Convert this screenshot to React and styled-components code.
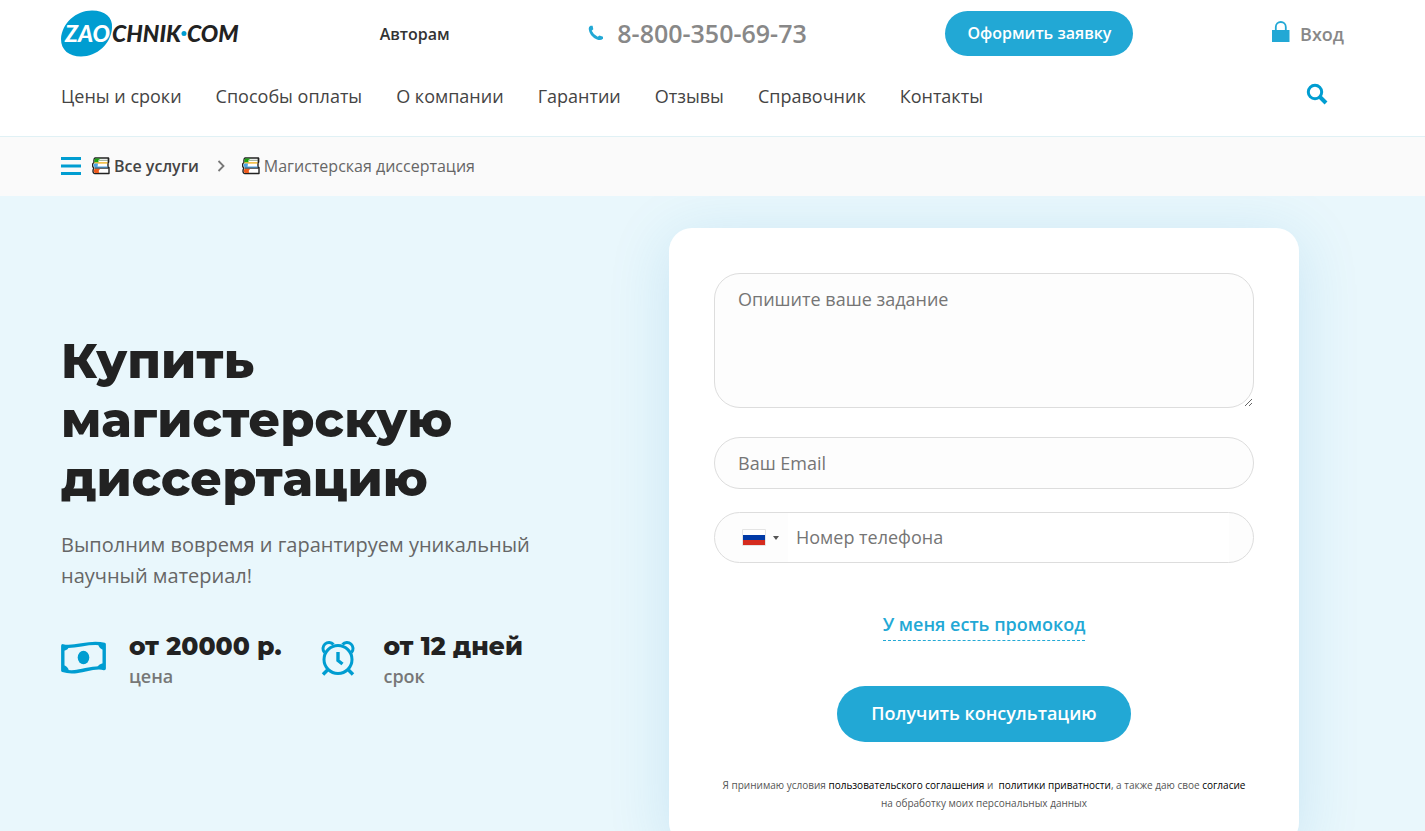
import React from 'react'
import styled, { createGlobalStyle } from 'styled-components'

const menu = ['Цены и сроки', 'Способы оплаты', 'О компании', 'Гарантии', 'Отзывы', 'Справочник', 'Контакты']

const Books = () => (
  <BooksIcon viewBox="0 0 18 18" aria-hidden="true">
    <path d="M3 1H16.500V5.500H16V10.500H17V16.500H3Q1 16.500 1 14Q1 12 2 11Q.500 10 .500 8Q.500 6.500 2 5.500Q1.500 1.500 3 1Z" fill="#fff" stroke="#222" strokeWidth="1.400" strokeLinejoin="round" />
    <path d="M3 1.500H9L6.500 3V5.500H2.500Q2 2.500 3 1.500Z" fill="#18a311" />
    <path d="M6.500 3.300H16" stroke="#8fa58c" />
    <path d="M2.500 5.900H15.500" stroke="#f0b323" strokeWidth="1.400" />
    <path d="M2.500 6.500H6L5.500 10H2.500Q.500 8 2.500 6.500Z" fill="#4da3e2" />
    <path d="M3 10.200H15.500" stroke="#4da3e2" strokeWidth="1.400" />
    <path d="M3 11.200H16.500" stroke="#222" />
    <path d="M2.500 12H8Q6 13.500 7 16H3Q1 14.500 2.500 12Z" fill="#ee5a1c" />
    <path d="M16.500 1V5" stroke="#222" strokeWidth="1.400" />
  </BooksIcon>
)

const App = () => {
  return (
    <>
      <GlobalStyle />
      <Header>
        <TopRow>
          <Logo href="#">
            <LogoMark viewBox="0 0 180 48" role="img" aria-label="ZAOCHNIK.COM">
              <path d="M31 .500C44 .500 52 7 51 18C50 34 36 46.500 20 46.500C8 46.500 0 40 0 29C1 13 15 .500 31 .500Z" fill="#009dd1" />
              <text x="4" y="32" fill="#fff">ZAO</text>
              <text x="51" y="32" fill="#222">CHNIK</text>
              <circle cx="123" cy="23.500" r="2.500" fill="#009dd1" />
              <text x="126" y="32" fill="#222">COM</text>
            </LogoMark>
          </Logo>
          <AuthorLink href="#">Авторам</AuthorLink>
          <Phone href="tel:88003506973">
            <svg width="16" height="16" viewBox="0 0 16 16" aria-hidden="true">
              <path d="M2.500.700 4.600.700 5.300 4.300 3.700 5.700Q5.500 9.800 9.700 11.700L11.500 10.400 15 11.800V13.800Q12.500 16 9 14.400Q1.500 11.500.700 4Q.500 1.800 2.500.700Z" fill="#22a8d5" />
            </svg>
            8-800-350-69-73
          </Phone>
          <Order type="button">Оформить заявку</Order>
          <Login href="#">
            <svg width="18" height="26" viewBox="0 0 18 26" aria-hidden="true">
              <path d="M0 9h17.500v12H0z" fill="#22a8d5" />
              <path d="M3.800 10V6a5 5 0 0 1 10 0v4" fill="none" stroke="#22a8d5" strokeWidth="1.800" />
            </svg>
            Вход
          </Login>
        </TopRow>
        <NavRow>
          <Nav>
            {menu.map((item) => <NavLink href="#" key={item}>{item}</NavLink>)}
          </Nav>
          <IconButton type="button" aria-label="Поиск">
            <svg width="22" height="26" viewBox="0 0 22 26" fill="none" stroke="#009dd1">
              <circle cx="9" cy="9" r="6.700" strokeWidth="3" />
              <path d="m14 14 6 6" strokeWidth="4" />
            </svg>
          </IconButton>
        </NavRow>
      </Header>

      <Crumbs>
        <IconButton type="button" aria-label="Меню">
          <svg width="20" height="18" viewBox="0 0 20 18" fill="#009dd1">
            <path d="M0 0h20v3H0zM0 7.500h20v3H0zM0 15h20v3H0z" />
          </svg>
        </IconButton>
        <Crumb href="#" $strong><Books />Все услуги</Crumb>
        <svg width="8" height="12" viewBox="0 0 8 12" aria-hidden="true">
          <path d="m1.500 1 5 5-5 5" fill="none" stroke="#777" strokeWidth="1.800" />
        </svg>
        <Crumb href="#"><Books />Магистерская диссертация</Crumb>
      </Crumbs>

      <Hero>
        <Intro>
          <Title>Купить магистерскую диссертацию</Title>
          <Lead>Выполним вовремя и гарантируем уникальный научный материал!</Lead>
          <Facts>
            <Fact>
              <svg width="45" height="33" viewBox="0 0 45 33" aria-hidden="true">
                <path d="M1.800 4.800C15 8 28-1 43.200 3.500V27.500C30 24 17 34.500 1.800 29.500Z" fill="none" stroke="#009dd1" strokeWidth="3.400" strokeLinejoin="round" />
                <path d="M2 5h6Q8 9 2 10zM43 3h-6q1 5 6 6zM2 30v-6q5 1 6 6zM43 28v-6q-6 1-7 5z" fill="#009dd1" />
                <ellipse cx="22.500" cy="16.500" rx="5.800" ry="6.800" fill="#009dd1" />
              </svg>
              <div>
                <FactValue>от 20000 р.</FactValue>
                <FactLabel>цена</FactLabel>
              </div>
            </Fact>
            <Fact>
              <svg width="34" height="36" viewBox="0 0 34 36" fill="none" stroke="#009dd1" aria-hidden="true">
                <circle cx="17" cy="19.500" r="14" strokeWidth="3" />
                <path d="M3.500 12.500A5.500 5.500 0 1 1 12.500 4.500M21.500 4.500A5.500 5.500 0 1 1 30.500 12.500" strokeWidth="3" />
                <path d="m6.500 30-4.500 4.500M27.500 30l4.500 4.500" strokeWidth="3.500" />
                <path d="M17 12v8.500l4.500 3.500" strokeWidth="3.400" />
              </svg>
              <div>
                <FactValue>от 12 дней</FactValue>
                <FactLabel>срок</FactLabel>
              </div>
            </Fact>
          </Facts>
        </Intro>

        <Form onSubmit={(e) => e.preventDefault()}>
          <TaskField aria-label="Опишите ваше задание" placeholder="Опишите ваше задание" />
          <Field type="email" aria-label="Ваш Email" placeholder="Ваш Email" />
          <PhoneField>
            <Country type="button" aria-label="Россия +7">
              <svg width="24" height="17" viewBox="0 0 24 17">
                <path d="M.500.500h23v16H.500z" fill="#fff" stroke="#e4e4e4" />
                <path d="M1 6h22v5H1z" fill="#0039a6" />
                <path d="M1 11h22v5H1z" fill="#d52b1e" />
              </svg>
              <svg width="6" height="4" viewBox="0 0 6 4"><path d="M0 0h6L3 4z" fill="#555" /></svg>
            </Country>
            <PhoneInput type="tel" aria-label="Номер телефона" placeholder="Номер телефона" />
          </PhoneField>
          <Promo type="button">У меня есть промокод</Promo>
          <Submit type="submit">Получить консультацию</Submit>
          <Terms>
            Я принимаю условия <a href="#">пользовательского соглашения</a> и&nbsp; <a href="#">политики приватности</a>, а также даю свое <a href="#">согласие</a>
            <br />
            на обработку моих персональных данных
          </Terms>
        </Form>
      </Hero>
    </>
  )
}

const GlobalStyle = createGlobalStyle`
  * {
    box-sizing: border-box;
  }
  body {
    margin: 0;
    background: #fff;
    color: #444;
    font-family: "Open Sans", sans-serif;
    overflow-x: hidden;
  }
  ::-webkit-scrollbar {
    display: none;
  }
  a {
    color: inherit;
    text-decoration: none;
  }
  button {
    border: 0;
    padding: 0;
    background: none;
    font-family: inherit;
    cursor: pointer;
  }
  svg {
    flex: none;
    display: block;
  }
`

const Header = styled.header`
  padding: 10px 81px 0 61px;
  border-bottom: 1px solid #e0f1f5;
`

const TopRow = styled.div`
  display: flex;
  align-items: center;
  justify-content: space-between;
  height: 47px;
`

const Logo = styled.a`
  display: block;
`

const LogoMark = styled.svg`
  width: 180px;
  height: 48px;
  font: italic 900 23px Lato, sans-serif;
`

const AuthorLink = styled.a`
  color: #333;
  font-size: 16px;
  font-weight: 600;
`

const Phone = styled.a`
  display: flex;
  align-items: center;
  gap: 13px;
  padding-bottom: 2px;
  color: #888;
  font-size: 25px;
  font-weight: 600;
`

const Order = styled.button`
  height: 45px;
  padding: 0 22px 1px;
  border-radius: 23px;
  background: #22a8d5;
  color: #fff;
  font-size: 16px;
  font-weight: 600;
`

const Login = styled.a`
  display: flex;
  align-items: center;
  gap: 10px;
  color: #888;
  font-size: 18px;
  font-weight: 600;
`

const NavRow = styled.div`
  display: flex;
  align-items: center;
  justify-content: space-between;
  height: 79px;
  padding: 0 16px 1px 0;
`

const Nav = styled.nav`
  display: flex;
  gap: 34px;
`

const NavLink = styled.a`
  color: #444;
  font-size: 18px;
`

const IconButton = styled.button`
  display: flex;
`

const Crumbs = styled.nav`
  display: flex;
  align-items: center;
  height: 59px;
  padding: 0 61px 1px;
  background: #fafafa;
`

const Crumb = styled.a`
  display: flex;
  align-items: center;
  gap: 4px;
  margin: 0 18px 0 11px;
  color: ${({ $strong }) => ($strong ? '#444' : '#666')};
  font-size: 16px;
  font-weight: ${({ $strong }) => ($strong ? 600 : 400)};

  svg + & {
    margin-left: 17px;
  }
`

const BooksIcon = styled.svg`
  width: 18px;
  height: 18px;
`

const Hero = styled.main`
  display: flex;
  justify-content: space-between;
  align-items: flex-start;
  padding: 32px 126px 48px 61px;
  overflow: hidden;
  background: #e9f7fc;
`

const Intro = styled.section`
  width: 500px;
  padding-top: 103px;
`

const Title = styled.h1`
  margin: 0 0 21px;
  color: #222;
  font-family: Montserrat, Inter, sans-serif;
  font-size: 49px;
  font-weight: 800;
  line-height: 59px;
`

const Lead = styled.p`
  margin: 0 0 40px;
  color: #666;
  font-size: 20px;
  line-height: 31px;
`

const Facts = styled.div`
  display: flex;
  gap: 40px;
`

const Fact = styled.div`
  display: flex;
  align-items: center;
  gap: 23px;

  & + & {
    gap: 28px;
  }

  svg {
    margin-bottom: 7px;
  }
`

const FactValue = styled.div`
  color: #222;
  font-family: Montserrat, Inter, sans-serif;
  font-size: 25px;
  font-weight: 800;
  line-height: 30px;
  white-space: nowrap;
`

const FactLabel = styled.div`
  color: #777;
  font-size: 18px;
  font-weight: 600;
  line-height: 30px;
`

const Form = styled.form`
  display: flex;
  flex-direction: column;
  align-items: center;
  width: 630px;
  padding: 45px 45px 34px;
  border-radius: 23px;
  background: #fff;
  box-shadow: 0 10px 60px rgba(34, 140, 200, 0.17);
`

const Field = styled.input`
  width: 100%;
  height: 52px;
  padding: 0 23px;
  border: 1px solid #ddd;
  border-radius: 26px;
  background: #fdfdfd;
  color: #444;
  font-family: inherit;
  font-size: 18px;

  &::placeholder {
    color: #757575;
  }
`

const TaskField = styled(Field).attrs({ as: 'textarea' })`
  height: 135px;
  margin-bottom: 29px;
  padding: 13px 23px;
`

const PhoneField = styled.div`
  display: flex;
  width: 100%;
  height: 51px;
  margin-top: 23px;
  padding-right: 24px;
  overflow: hidden;
  border: 1px solid #ddd;
  border-radius: 26px;
  background: #fdfdfd;
`

const Country = styled.button`
  display: flex;
  align-items: center;
  gap: 7px;
  padding: 0 9px 0 27px;
`

const PhoneInput = styled(Field)`
  flex: 1;
  height: 100%;
  padding: 0 8px 2px;
  border: 0;
  border-radius: 0;
  background: #fff;
`

const Promo = styled.button`
  margin: 48px 0 45px;
  padding-bottom: 2px;
  border-bottom: 1px dashed #22a8d5;
  color: #22a8d5;
  font-size: 18px;
  font-weight: 600;
  line-height: 27px;
`

const Submit = styled.button`
  height: 56px;
  padding: 0 34px 2px;
  border-radius: 28px;
  background: #22a8d5;
  color: #fff;
  font-size: 18px;
  font-weight: 600;
`

const Terms = styled.p`
  margin: 34px 0 0;
  color: #555;
  font-size: 10px;
  line-height: 18px;
  text-align: center;

  a {
    color: #000;
  }
`

export default App
